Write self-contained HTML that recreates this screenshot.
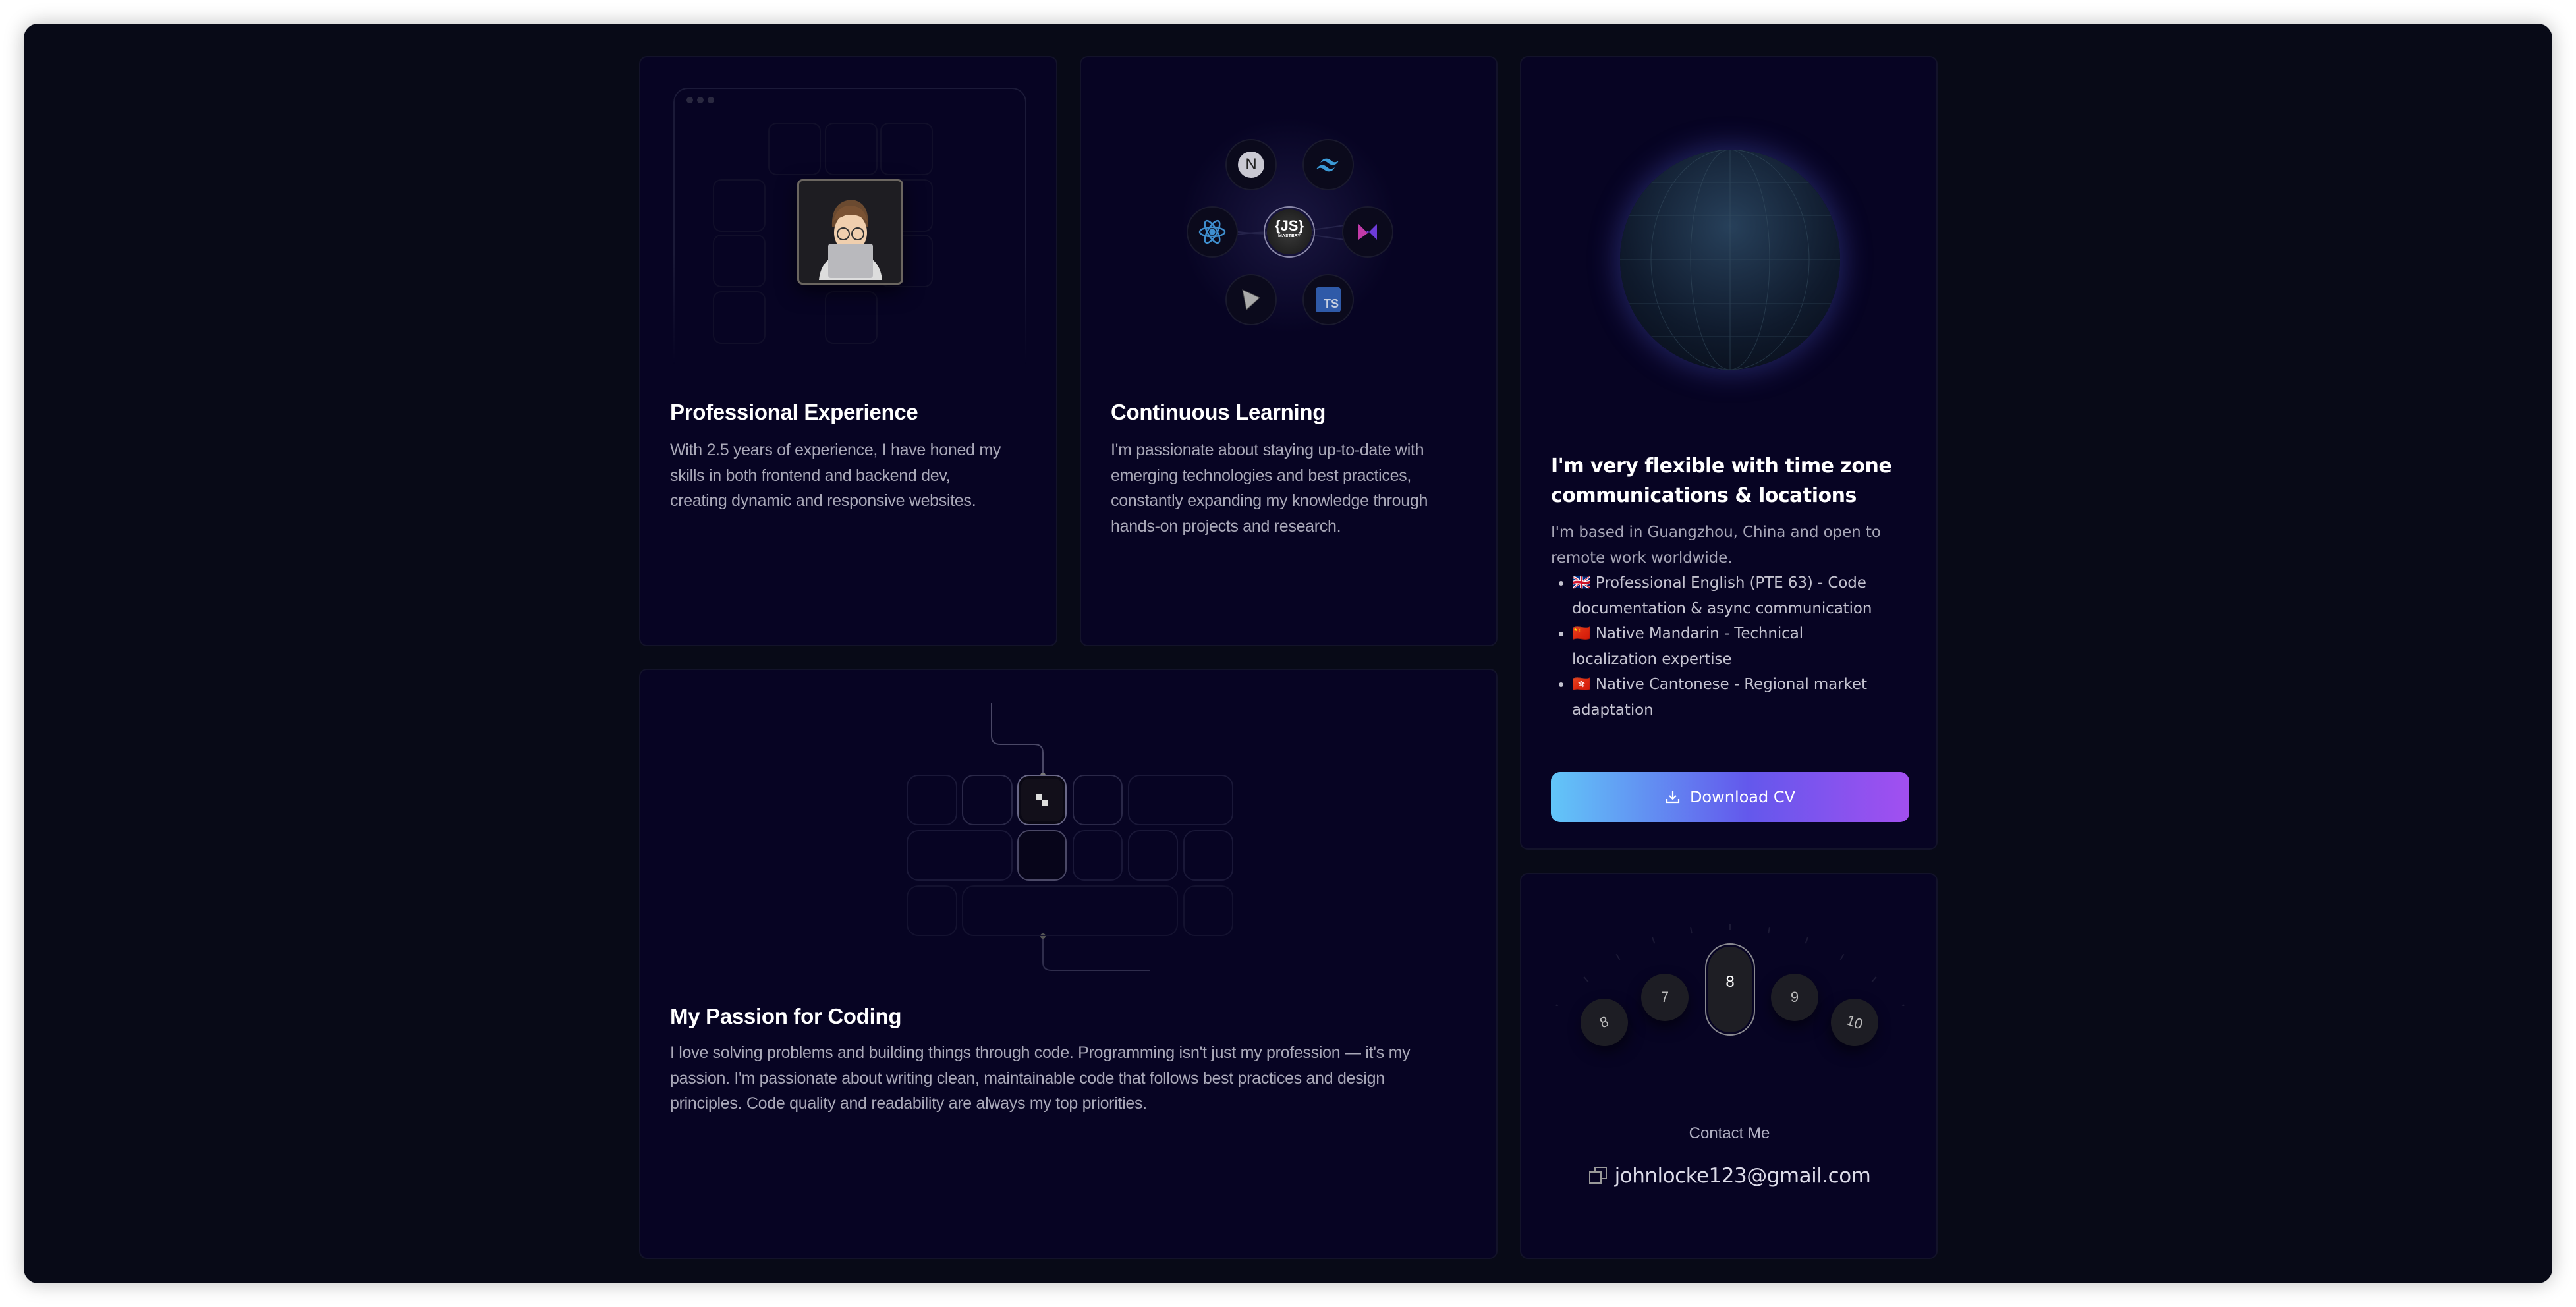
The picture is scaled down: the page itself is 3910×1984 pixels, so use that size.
<!DOCTYPE html>
<html><head><meta charset="utf-8"><style>
*{margin:0;padding:0;box-sizing:border-box}
html,body{width:3910px;height:1984px;background:#fff;overflow:hidden;font-family:"Liberation Sans",sans-serif}
.frame{position:absolute;left:36px;top:36px;width:3838px;height:1912px;background:#080a17;border-radius:22px;box-shadow:0 0 30px rgba(0,0,0,.25)}
.card{position:absolute;background:#070423;border:2px solid #13132a;border-radius:12px;overflow:hidden}
.t{position:absolute;color:#fff;font-weight:bold;font-size:33px;letter-spacing:-0.3px}
.p{position:absolute;color:#a9a8b8;font-size:25px;line-height:38.5px;letter-spacing:-0.3px}
.ic{position:absolute;width:78px;height:78px;border-radius:50%;background:#0b0a1c;border:2px solid #1a1a2e;display:flex;align-items:center;justify-content:center}
.key{position:absolute;border:2px solid #1a1838;border-radius:18px}
.ball{position:absolute;border-radius:50%;background:#1d1d24;color:#bbb;font-size:22px;display:flex;align-items:center;justify-content:center;box-shadow:0 10px 20px rgba(0,0,0,.5)}
</style></head><body>
<div class="frame"></div>

<!-- card1 -->
<div class="card" style="left:970px;top:85px;width:635px;height:896px">
  <div style="position:absolute;left:50px;top:46px;width:536px;height:420px;border:2px solid #1b1a38;border-bottom:none;border-radius:22px 22px 0 0;-webkit-mask:linear-gradient(#000 60%,transparent)"></div>
  <div style="position:absolute;left:70px;top:60px;display:flex;gap:6px"><i style="width:10px;height:10px;border-radius:50%;background:#2a2940"></i><i style="width:10px;height:10px;border-radius:50%;background:#2a2940"></i><i style="width:10px;height:10px;border-radius:50%;background:#2a2940"></i></div>
  <svg style="position:absolute;left:0;top:0" width="635" height="500">
    <g fill="none" stroke="#110f2a" stroke-width="2">
      <rect x="195" y="100" width="78" height="78" rx="12"/><rect x="281" y="100" width="78" height="78" rx="12"/><rect x="365" y="100" width="78" height="78" rx="12"/>
      <rect x="111" y="186" width="78" height="78" rx="12"/><rect x="365" y="186" width="78" height="78" rx="12"/>
      <rect x="111" y="270" width="78" height="78" rx="12"/><rect x="365" y="270" width="78" height="78" rx="12"/>
      <rect x="111" y="356" width="78" height="78" rx="12"/><rect x="281" y="356" width="78" height="78" rx="12"/>
    </g>
  </svg>
  <div style="position:absolute;left:238px;top:185px;width:161px;height:160px;background:#1e1d22;border:3px solid #6b6660;border-radius:8px;box-shadow:0 10px 30px rgba(0,0,0,.6)">
    <svg width="155" height="154" viewBox="0 0 155 154">
      <path d="M50 70 Q48 30 80 28 Q108 32 104 70Z" fill="#6b4a30"/>
      <ellipse cx="78" cy="78" rx="25" ry="30" fill="#f0cfae"/>
      <path d="M52 60 Q60 32 85 38 Q100 42 104 62 Q90 48 70 52Z" fill="#7a5233"/>
      <circle cx="67" cy="80" r="9" fill="none" stroke="#333" stroke-width="2"/><circle cx="89" cy="80" r="9" fill="none" stroke="#333" stroke-width="2"/>
      <path d="M30 150 Q34 110 78 108 Q122 110 126 150Z" fill="#ddd"/>
      <rect x="44" y="95" width="68" height="52" rx="4" fill="#b9b9bd"/>
    </svg>
  </div>
  <div class="t" style="left:45px;top:520px">Professional Experience</div>
  <div class="p" style="left:45px;top:577px;width:505px">With 2.5 years of experience, I have honed my skills in both frontend and backend dev, creating dynamic and responsive websites.</div>
</div>

<!-- card2 -->
<div class="card" style="left:1639px;top:85px;width:634px;height:896px">
  <div style="position:absolute;left:150px;top:90px;width:330px;height:330px;border-radius:50%;background:radial-gradient(#1a1740,transparent 70%)"></div>
  <svg style="position:absolute;left:0;top:0" width="634" height="500" fill="none" stroke="#25234a" stroke-width="2">
    <path d="M200 258 Q260 272 316 266 Q372 260 430 250"/>
    <path d="M200 276 Q260 262 316 266 Q372 272 430 282"/>
  </svg>
  <div class="ic" style="left:219px;top:124px"><div style="width:40px;height:40px;border-radius:50%;background:#c9c8d2;color:#222;font-size:24px;display:flex;align-items:center;justify-content:center">N</div></div>
  <div class="ic" style="left:336px;top:124px"><svg width="44" height="30" viewBox="0 0 44 30"><path d="M10 12 Q14 4 22 6 Q26 8 28 10 Q32 13 38 9 Q34 17 26 15 Q22 13 20 11 Q16 8 10 12Z M4 22 Q8 14 16 16 Q20 18 22 20 Q26 23 32 19 Q28 27 20 25 Q16 23 14 21 Q10 18 4 22Z" fill="#3b9ad6"/></svg></div>
  <div class="ic" style="left:160px;top:226px"><svg width="44" height="44" viewBox="-22 -22 44 44" fill="none" stroke="#3f8fcf" stroke-width="2.5"><ellipse rx="19" ry="7"/><ellipse rx="19" ry="7" transform="rotate(60)"/><ellipse rx="19" ry="7" transform="rotate(120)"/><circle r="3.5" fill="#3f8fcf"/></svg></div>
  <div style="position:absolute;left:277px;top:226px;width:78px;height:78px;border-radius:50%;border:2px solid #8a88a8;display:flex;align-items:center;justify-content:center"><div style="width:68px;height:68px;border-radius:50%;background:radial-gradient(#3a3a3a,#161616);color:#fff;text-align:center;font-weight:bold;font-size:22px;line-height:22px;padding-top:14px">{JS}<div style="font-size:7px;line-height:10px">MASTERY</div></div></div>
  <div class="ic" style="left:396px;top:226px"><svg width="32" height="28" viewBox="0 0 32 28"><path d="M2 2 L16 16 L30 2 V26 L16 12 L2 26Z" fill="#6d3bd8"/><path d="M2 2 L16 16 L2 26Z" fill="#c23aa8"/></svg></div>
  <div class="ic" style="left:219px;top:329px"><svg width="30" height="34" viewBox="0 0 30 34"><path d="M2 2 L28 14 L8 32Z" fill="#aaa" stroke="#555" stroke-width="1"/></svg></div>
  <div class="ic" style="left:336px;top:329px"><div style="width:38px;height:38px;background:#2f5aa8;border-radius:4px;color:#c8d0e0;font-weight:bold;font-size:18px;display:flex;align-items:flex-end;justify-content:flex-end;padding:2px 3px">TS</div></div>
  <div class="t" style="left:45px;top:520px">Continuous Learning</div>
  <div class="p" style="left:45px;top:577px;width:560px">I'm passionate about staying up-to-date with emerging technologies and best practices, constantly expanding my knowledge through hands-on projects and research.</div>
</div>

<!-- card3 -->
<div class="card" style="left:2307px;top:85px;width:634px;height:1205px">
  <div style="position:absolute;left:150px;top:140px;width:334px;height:334px;border-radius:50%;background:radial-gradient(circle at 50% 35%,#27405a,#0f1a2c 60%,#060a14);box-shadow:0 0 40px 8px rgba(80,90,200,.35);overflow:hidden">
    <svg width="334" height="334" fill="none" stroke="#3b5466" stroke-width="1" opacity=".5">
      <ellipse cx="167" cy="167" rx="60" ry="167"/><ellipse cx="167" cy="167" rx="120" ry="167"/><line x1="167" y1="0" x2="167" y2="334"/>
      <line x1="0" y1="100" x2="334" y2="100"/><line x1="0" y1="167" x2="334" y2="167"/><line x1="0" y1="234" x2="334" y2="234"/><line x1="0" y1="50" x2="334" y2="50"/><line x1="0" y1="284" x2="334" y2="284"/>
    </svg>
  </div>
  <div class="t" style="left:45px;top:598px;font-family:'DejaVu Sans',sans-serif;font-size:30px;line-height:45px;letter-spacing:-0.5px">I'm very flexible with time zone communications &amp; locations</div>
  <div class="p" style="left:45px;top:702px;width:520px;font-family:'DejaVu Sans',sans-serif;font-size:23px;line-height:38.5px;letter-spacing:-0.1px;color:#a6a5b6">I'm based in Guangzhou, China and open to remote work worldwide.
    <ul style="padding-left:32px;padding-right:10px;color:#c4c3d0">
      <li>🇬🇧 Professional English (PTE 63) - Code documentation &amp; async communication</li>
      <li>🇨🇳 Native Mandarin - Technical localization expertise</li>
      <li>🇭🇰 Native Cantonese - Regional market adaptation</li>
    </ul>
  </div>
  <div style="position:absolute;left:45px;top:1085px;width:544px;height:76px;border-radius:14px;background:linear-gradient(90deg,#62c6f8,#6358ec 55%,#a24ff0);color:#fff;font-family:'DejaVu Sans',sans-serif;font-size:24px;display:flex;align-items:center;justify-content:center;gap:14px">
    <svg width="24" height="24" viewBox="0 0 24 24" fill="none" stroke="#fff" stroke-width="2.2"><path d="M12 3v11M7 10l5 5 5-5M3 15v5h18v-5"/></svg>Download CV</div>
</div>

<!-- card4 -->
<div class="card" style="left:970px;top:1015px;width:1303px;height:896px">
  <svg style="position:absolute;left:0;top:0" width="1303" height="500" fill="none">
    <path d="M533 50 V100 Q533 113 546 113 H598 Q611 113 611 126 V160" stroke="#4a4866" stroke-width="2"/>
    <path d="M611 404 V444 Q611 456 624 456 H773" stroke="#2f2d4c" stroke-width="2"/>
    <circle cx="611" cy="160" r="4" fill="#777"/><circle cx="611" cy="404" r="4" fill="#555"/>
  </svg>
  <div class="key" style="left:404px;top:159px;width:77px;height:77px"></div>
  <div class="key" style="left:488px;top:159px;width:77px;height:77px;border-color:#2a2848"></div>
  <div class="key" style="left:572px;top:159px;width:75px;height:77px;border-color:#6a6888;background:#120f1a;box-shadow:inset 0 0 0 4px #0a0814"><svg style="position:absolute;left:24px;top:24px" width="26" height="26"><rect x="3" y="3" width="8" height="9" fill="#ddd"/><rect x="12" y="12" width="8" height="9" fill="#ddd"/></svg></div>
  <div class="key" style="left:656px;top:159px;width:76px;height:77px;border-color:#2a2848"></div>
  <div class="key" style="left:740px;top:159px;width:160px;height:77px"></div>
  <div class="key" style="left:404px;top:243px;width:161px;height:77px"></div>
  <div class="key" style="left:572px;top:243px;width:75px;height:77px;border-color:#4a4866;background:#07051a"></div>
  <div class="key" style="left:656px;top:243px;width:76px;height:77px"></div>
  <div class="key" style="left:740px;top:243px;width:76px;height:77px"></div>
  <div class="key" style="left:824px;top:243px;width:76px;height:77px"></div>
  <div class="key" style="left:404px;top:327px;width:77px;height:77px;border-color:#141230"></div>
  <div class="key" style="left:488px;top:327px;width:328px;height:77px;border-color:#141230"></div>
  <div class="key" style="left:824px;top:327px;width:76px;height:77px;border-color:#141230"></div>
  <div class="t" style="left:45px;top:507px">My Passion for Coding</div>
  <div class="p" style="left:45px;top:562px;width:1195px">I love solving problems and building things through code. Programming isn't just my profession — it's my passion. I'm passionate about writing clean, maintainable code that follows best practices and design principles. Code quality and readability are always my top priorities.</div>
</div>

<!-- card5 -->
<div class="card" style="left:2307px;top:1325px;width:634px;height:586px">
  <svg style="position:absolute;left:0;top:0" width="634" height="200" stroke="#1c1a36" stroke-width="2">
    <g transform="translate(317,420)">
      <line x1="0" y1="-345" x2="0" y2="-335" transform="rotate(-50)"/><line x1="0" y1="-345" x2="0" y2="-335" transform="rotate(-40)"/><line x1="0" y1="-345" x2="0" y2="-335" transform="rotate(-30)"/><line x1="0" y1="-345" x2="0" y2="-335" transform="rotate(-20)"/><line x1="0" y1="-345" x2="0" y2="-335" transform="rotate(-10)"/><line x1="0" y1="-345" x2="0" y2="-335"/><line x1="0" y1="-345" x2="0" y2="-335" transform="rotate(10)"/><line x1="0" y1="-345" x2="0" y2="-335" transform="rotate(20)"/><line x1="0" y1="-345" x2="0" y2="-335" transform="rotate(30)"/><line x1="0" y1="-345" x2="0" y2="-335" transform="rotate(40)"/><line x1="0" y1="-345" x2="0" y2="-335" transform="rotate(50)"/>
    </g>
  </svg>
  <div class="ball" style="left:90px;top:189px;width:72px;height:72px;transform:rotate(-20deg)">8</div>
  <div class="ball" style="left:182px;top:151px;width:72px;height:72px">7</div>
  <div style="position:absolute;left:279px;top:105px;width:76px;height:140px;border-radius:38px;border:2px solid #8a8a90;display:flex;align-items:center;justify-content:center"><div style="width:66px;height:130px;border-radius:33px;background:#1e1e24;color:#fff;font-size:24px;text-align:center;padding-top:40px">8</div></div>
  <div class="ball" style="left:379px;top:151px;width:72px;height:72px">9</div>
  <div class="ball" style="left:470px;top:189px;width:72px;height:72px;transform:rotate(20deg)">10</div>
  <div style="position:absolute;left:0;width:632px;top:380px;text-align:center;color:#b0afc2;font-size:24px">Contact Me</div>
  <div style="position:absolute;left:0;width:632px;top:440px;text-align:center;color:#dcdbe8;font-family:'DejaVu Sans',sans-serif;font-size:31px;letter-spacing:-0.5px">
    <svg width="30" height="30" viewBox="0 0 30 30" fill="none" stroke="#999" stroke-width="2" style="vertical-align:-4px;margin-right:10px"><rect x="2" y="10" width="17" height="17"/><path d="M10 10V3h17v17h-8"/></svg>johnlocke123@gmail.com</div>
</div>
</body></html>
